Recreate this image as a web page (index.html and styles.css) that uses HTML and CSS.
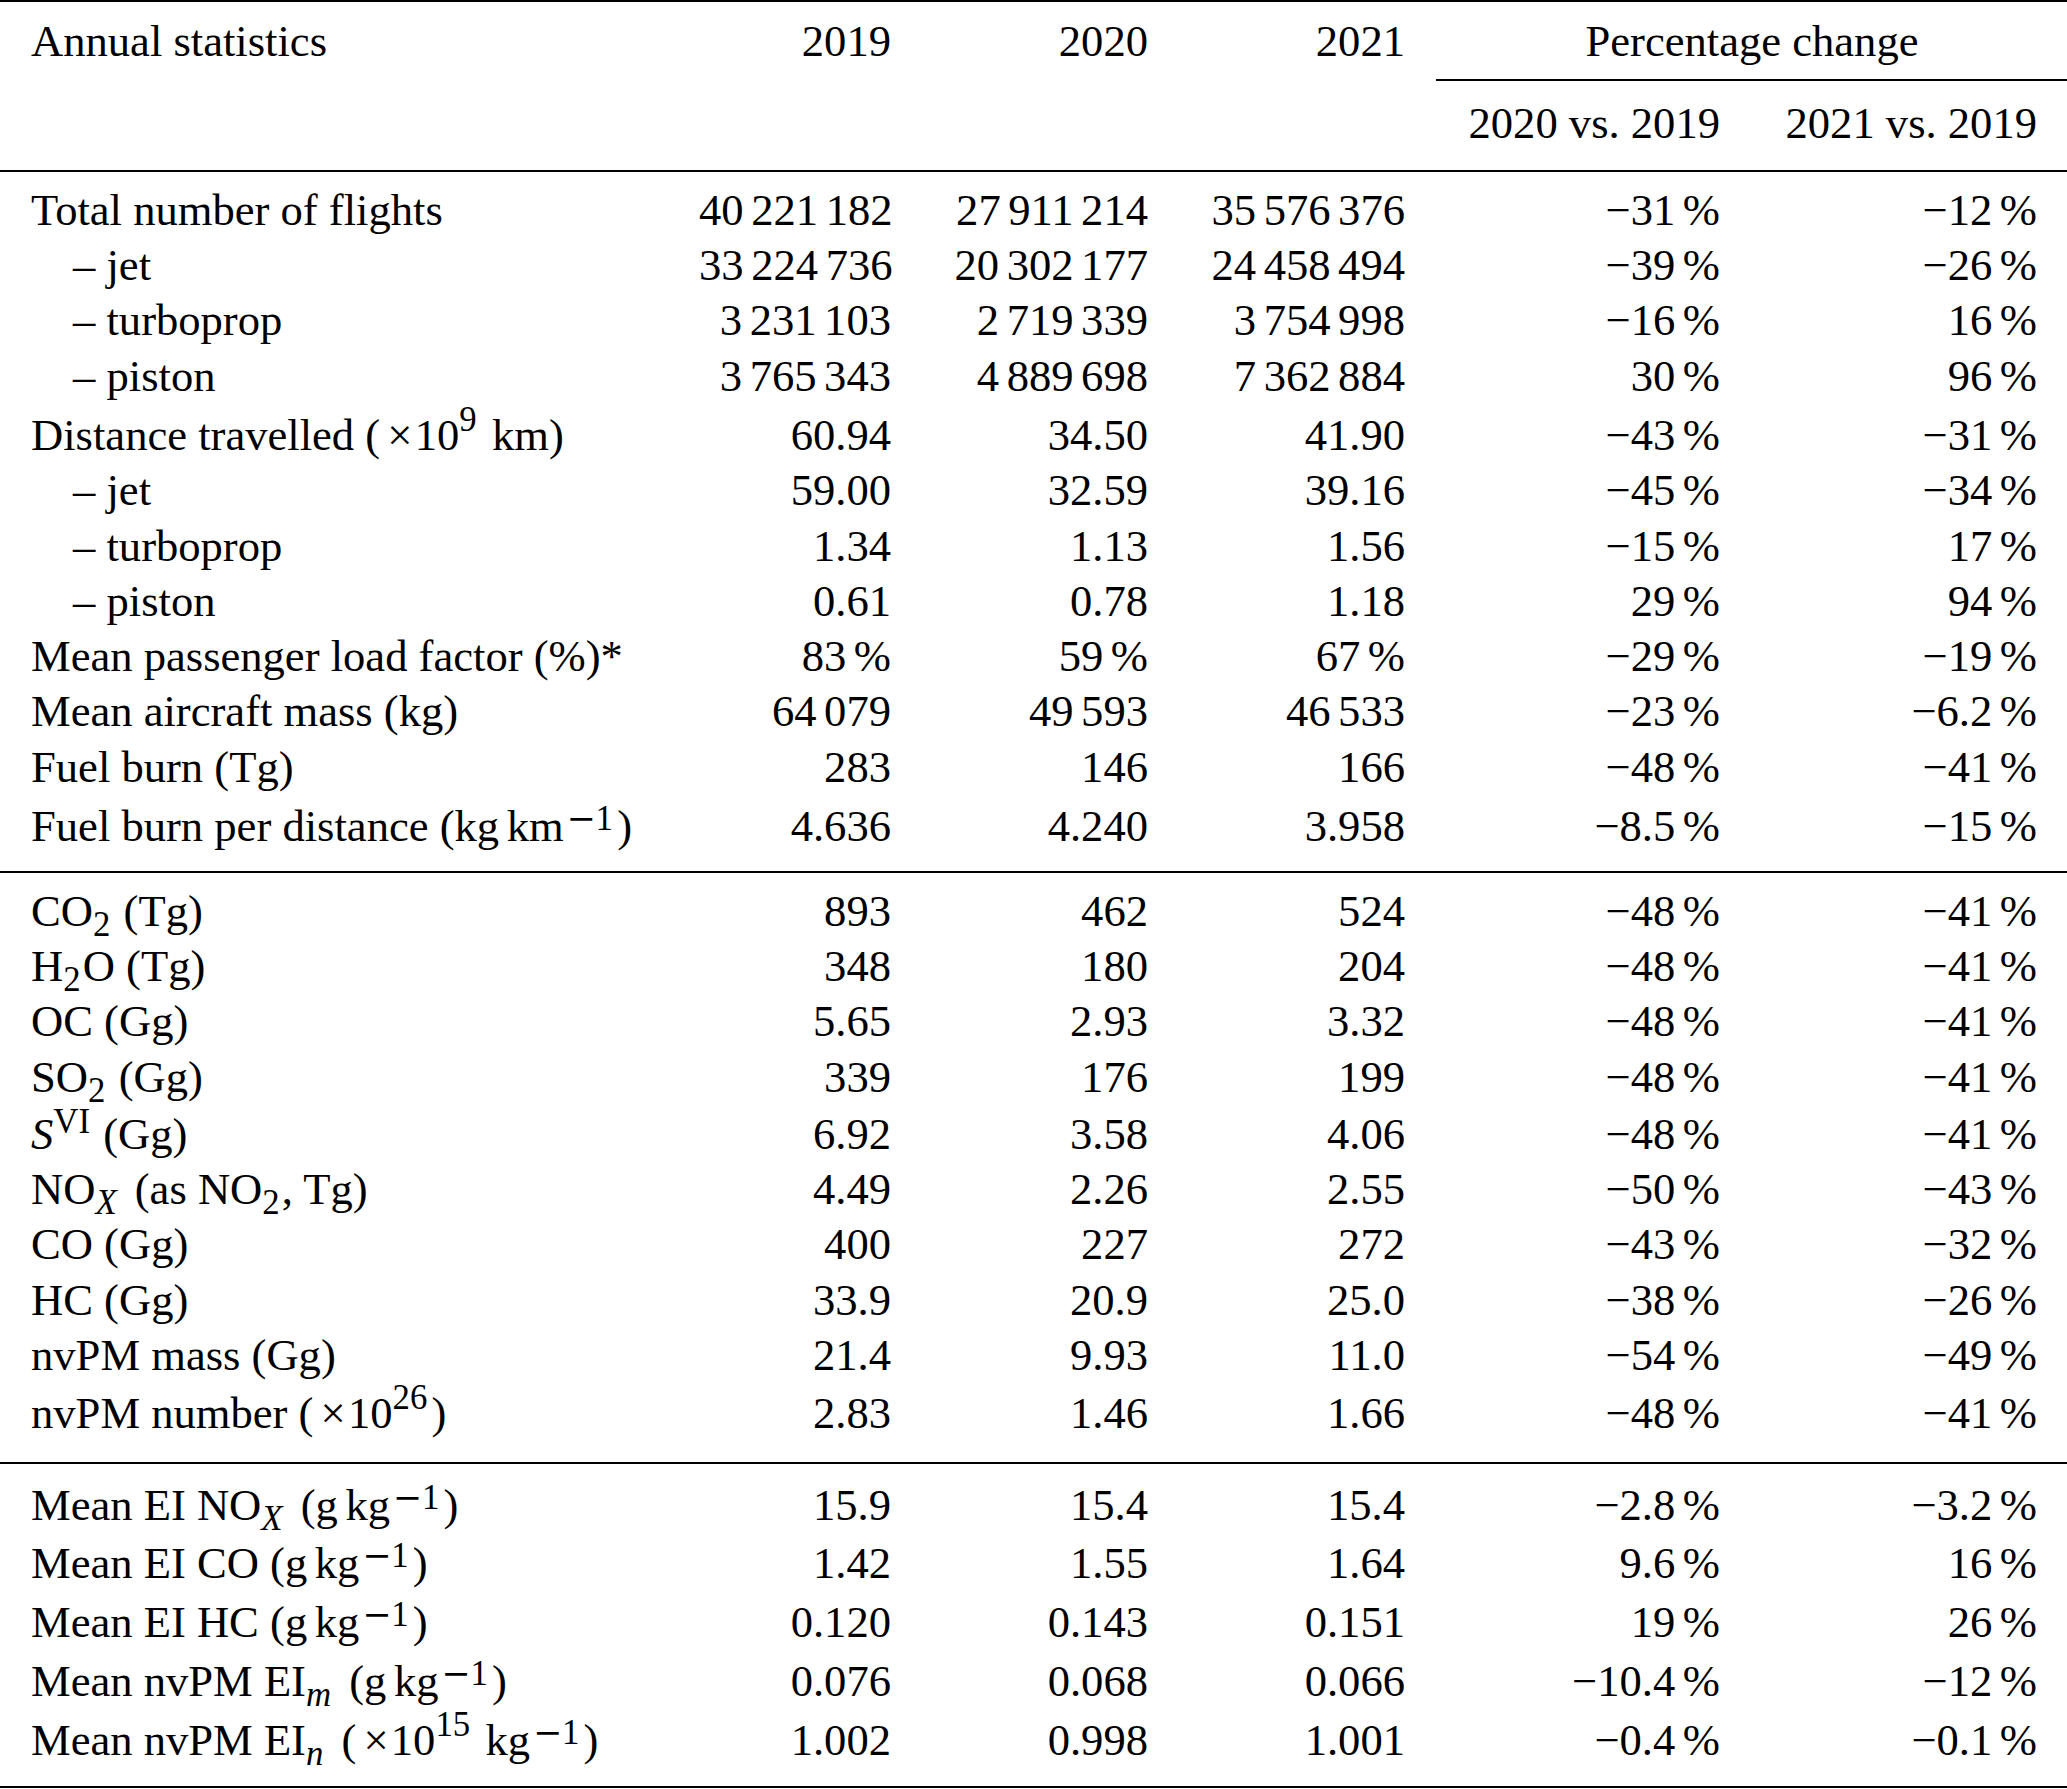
FILE: index.html
```html
<!DOCTYPE html>
<html lang="en">
<head>
<meta charset="utf-8">
<title>Annual statistics</title>
<link rel="stylesheet" href="styles.css">
</head>
<body>
<table class="stats">
  <colgroup>
    <col class="c1"><col class="c2"><col class="c3"><col class="c4"><col class="c5"><col class="c6">
  </colgroup>
  <thead>
    <tr class="h1">
      <th class="lbl">Annual statistics</th>
      <th>2019</th>
      <th>2020</th>
      <th>2021</th>
      <th colspan="2" class="group">Percentage change</th>
    </tr>
    <tr class="h2">
      <th class="lbl">&nbsp;</th>
      <th>&nbsp;</th>
      <th>&nbsp;</th>
      <th>&nbsp;</th>
      <th>2020 vs. 2019</th>
      <th>2021 vs. 2019</th>
    </tr>
  </thead>
  <tbody class="sec s1">
    <tr class="first"><td class="lbl">Total number of flights</td><td>40 221 182</td><td>27 911 214</td><td>35 576 376</td><td>−31 %</td><td>−12 %</td></tr>
    <tr><td class="lbl ind">– jet</td><td>33 224 736</td><td>20 302 177</td><td>24 458 494</td><td>−39 %</td><td>−26 %</td></tr>
    <tr><td class="lbl ind">– turboprop</td><td>3 231 103</td><td>2 719 339</td><td>3 754 998</td><td>−16 %</td><td>16 %</td></tr>
    <tr><td class="lbl ind">– piston</td><td>3 765 343</td><td>4 889 698</td><td>7 362 884</td><td>30 %</td><td>96 %</td></tr>
    <tr class="tall4"><td class="lbl">Distance travelled (<span class="times">×</span>10<span class="sup-p">9</span> km)</td><td>60.94</td><td>34.50</td><td>41.90</td><td>−43 %</td><td>−31 %</td></tr>
    <tr><td class="lbl ind">– jet</td><td>59.00</td><td>32.59</td><td>39.16</td><td>−45 %</td><td>−34 %</td></tr>
    <tr><td class="lbl ind">– turboprop</td><td>1.34</td><td>1.13</td><td>1.56</td><td>−15 %</td><td>17 %</td></tr>
    <tr><td class="lbl ind">– piston</td><td>0.61</td><td>0.78</td><td>1.18</td><td>29 %</td><td>94 %</td></tr>
    <tr><td class="lbl">Mean passenger load factor (%)*</td><td>83 %</td><td>59 %</td><td>67 %</td><td>−29 %</td><td>−19 %</td></tr>
    <tr><td class="lbl">Mean aircraft mass (kg)</td><td>64 079</td><td>49 593</td><td>46 533</td><td>−23 %</td><td>−6.2 %</td></tr>
    <tr><td class="lbl">Fuel burn (Tg)</td><td>283</td><td>146</td><td>166</td><td>−48 %</td><td>−41 %</td></tr>
    <tr class="tall4 last"><td class="lbl">Fuel burn per distance (<span class="unit">kg km</span><span class="sup-u"><span class="mm">−</span>1</span>)</td><td>4.636</td><td>4.240</td><td>3.958</td><td>−8.5 %</td><td>−15 %</td></tr>
  </tbody>
  <tbody class="sec s2">
    <tr class="first"><td class="lbl">CO<span class="sub">2</span> (Tg)</td><td>893</td><td>462</td><td>524</td><td>−48 %</td><td>−41 %</td></tr>
    <tr><td class="lbl">H<span class="sub">2</span>O (Tg)</td><td>348</td><td>180</td><td>204</td><td>−48 %</td><td>−41 %</td></tr>
    <tr><td class="lbl">OC (Gg)</td><td>5.65</td><td>2.93</td><td>3.32</td><td>−48 %</td><td>−41 %</td></tr>
    <tr><td class="lbl">SO<span class="sub">2</span> (Gg)</td><td>339</td><td>176</td><td>199</td><td>−48 %</td><td>−41 %</td></tr>
    <tr class="tall2"><td class="lbl"><i>S</i><span class="sup-s">VI</span> (Gg)</td><td>6.92</td><td>3.58</td><td>4.06</td><td>−48 %</td><td>−41 %</td></tr>
    <tr><td class="lbl">NO<span class="sub it">X</span> (as NO<span class="sub">2</span>, Tg)</td><td>4.49</td><td>2.26</td><td>2.55</td><td>−50 %</td><td>−43 %</td></tr>
    <tr><td class="lbl">CO (Gg)</td><td>400</td><td>227</td><td>272</td><td>−43 %</td><td>−32 %</td></tr>
    <tr><td class="lbl">HC (Gg)</td><td>33.9</td><td>20.9</td><td>25.0</td><td>−38 %</td><td>−26 %</td></tr>
    <tr><td class="lbl">nvPM mass (Gg)</td><td>21.4</td><td>9.93</td><td>11.0</td><td>−54 %</td><td>−49 %</td></tr>
    <tr class="tall3 last"><td class="lbl">nvPM number (<span class="times">×</span>10<span class="sup-p">26</span>)</td><td>2.83</td><td>1.46</td><td>1.66</td><td>−48 %</td><td>−41 %</td></tr>
  </tbody>
  <tbody class="sec s3">
    <tr class="first"><td class="lbl">Mean EI NO<span class="sub it">X</span> (<span class="unit">g kg</span><span class="sup-u"><span class="mm">−</span>1</span>)</td><td>15.9</td><td>15.4</td><td>15.4</td><td>−2.8 %</td><td>−3.2 %</td></tr>
    <tr class="tall35"><td class="lbl">Mean EI CO (<span class="unit">g kg</span><span class="sup-u"><span class="mm">−</span>1</span>)</td><td>1.42</td><td>1.55</td><td>1.64</td><td>9.6 %</td><td>16 %</td></tr>
    <tr class="tall35"><td class="lbl">Mean EI HC (<span class="unit">g kg</span><span class="sup-u"><span class="mm">−</span>1</span>)</td><td>0.120</td><td>0.143</td><td>0.151</td><td>19 %</td><td>26 %</td></tr>
    <tr class="tall35"><td class="lbl">Mean nvPM EI<span class="sub it">m</span> (<span class="unit">g kg</span><span class="sup-u"><span class="mm">−</span>1</span>)</td><td>0.076</td><td>0.068</td><td>0.066</td><td>−10.4 %</td><td>−12 %</td></tr>
    <tr class="tall35 last"><td class="lbl">Mean nvPM EI<span class="sub it">n</span> (<span class="times">×</span>10<span class="sup-p">15</span> <span class="unit">kg</span><span class="sup-u"><span class="mm">−</span>1</span>)</td><td>1.002</td><td>0.998</td><td>1.001</td><td>−0.4 %</td><td>−0.1 %</td></tr>
  </tbody>
</table>
</body>
</html>
```

FILE: styles.css
```css
html, body {
  margin: 0;
  padding: 0;
  background: #ffffff;
}

body {
  font-family: "Liberation Serif", "Times New Roman", serif;
  color: #000000;
}

.stats {
  border-collapse: separate;
  border-spacing: 0;
  table-layout: fixed;
  width: 2067px;
  font-size: 44.6px;
  line-height: 55.3px;
}

.c1 { width: 668px; }
.c2 { width: 254px; }
.c3 { width: 257px; }
.c4 { width: 257px; }
.c5 { width: 315px; }
.c6 { width: 316px; }

.stats th,
.stats td {
  padding: 0 31px;
  text-align: right;
  vertical-align: baseline;
  font-weight: normal;
  white-space: nowrap;
  word-spacing: -0.08em;
}

.stats th {
  word-spacing: normal;
}

.stats th:last-child,
.stats td:last-child {
  padding-right: 30px;
}

.stats .lbl {
  text-align: left;
  word-spacing: normal;
}

.stats .ind {
  padding-left: 73px;
}

/* header */
.h1 > th {
  border-top: 2px solid #000;
  padding-top: 11.8px;
  padding-bottom: 9.9px;
}

.h1 > th.group {
  text-align: center;
  border-bottom: 2px solid #000;
}

.h2 > th {
  padding-top: 15.3px;
  padding-bottom: 18.4px;
  border-bottom: 2px solid #000;
}

/* sections */
.s1 .first > td { padding-top: 10.8px; }
.s2 .first > td,
.s3 .first > td { border-top: 2px solid #000; }
.s2 .first > td { padding-top: 10.8px; }
.s3 .first > td { padding-top: 13.8px; }

.tall2 > td { padding-top: 1.8px; }
.tall3 > td { padding-top: 3px; }
.tall35 > td { padding-top: 3.5px; }
.tall4 > td { padding-top: 4px; }

.s1 .last > td { padding-bottom: 16.6px; }
.s2 .last > td { padding-bottom: 20.4px; }
.s3 .last > td {
  padding-bottom: 17.8px;
  border-bottom: 2px solid #000;
}

/* math-like pieces */
.times {
  margin-left: 0.16em;
  margin-right: 0.05em;
}

.unit {
  word-spacing: -0.08em;
}

.sup-p,
.sup-u,
.sup-s,
.sub {
  font-size: 0.78em;
  line-height: 0;
  margin-right: 0.06em;
}

.sup-p { vertical-align: 19px; margin-right: 0.12em; }
.sup-s { vertical-align: 16px; }
.sup-u { vertical-align: 11px; margin-left: 0.08em; margin-right: 0.12em; }
.sub { vertical-align: -10px; }
.sub.it { margin-right: 0.2em; }

.mm {
  font-family: "DejaVu Serif", "Liberation Serif", serif;
}

.it {
  font-style: italic;
}
```
